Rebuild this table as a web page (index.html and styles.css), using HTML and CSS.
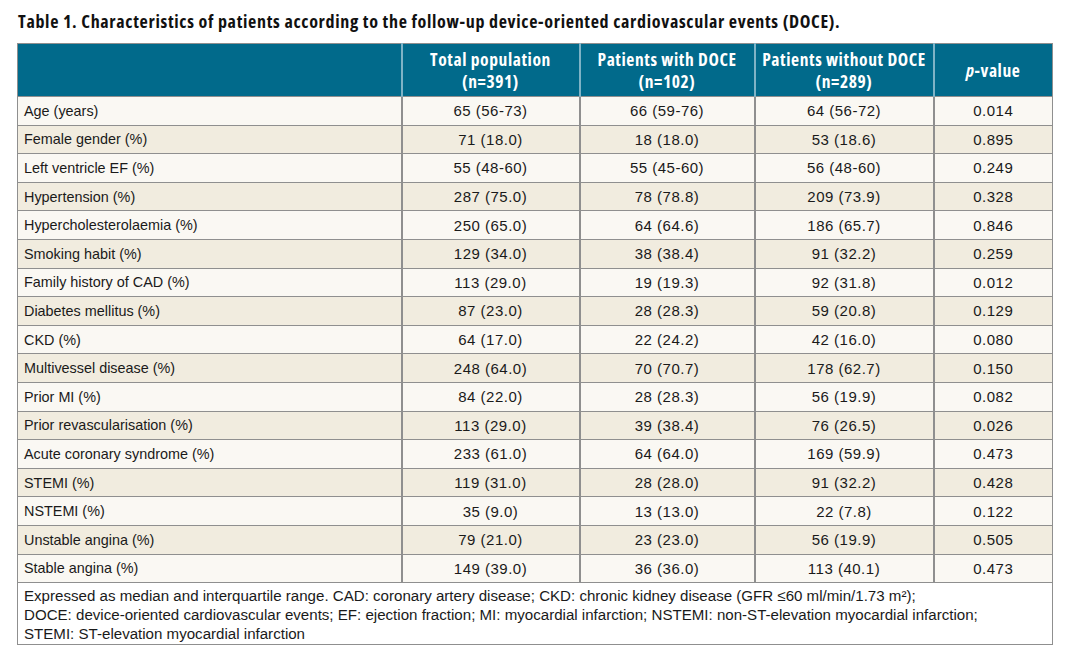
FILE: index.html
```html
<!DOCTYPE html>
<html>
<head>
<meta charset="utf-8">
<link rel="stylesheet" href="styles.css">
</head>
<body>
<div class="wrap">
<h1 class="title">Table 1. Characteristics of patients according to the follow-up device-oriented cardiovascular events (DOCE).</h1>
<table class="tbl">
<colgroup><col class="c1"><col class="c2"><col class="c3"><col class="c4"><col class="c5"></colgroup>
<thead>
<tr><th></th><th>Total population<br>(n=391)</th><th>Patients with DOCE<br>(n=102)</th><th>Patients without DOCE<br>(n=289)</th><th><i>p</i>-value</th></tr>
</thead>
<tbody>
<tr><td>Age (years)</td><td>65 (56-73)</td><td>66 (59-76)</td><td>64 (56-72)</td><td>0.014</td></tr>
<tr><td>Female gender (%)</td><td>71 (18.0)</td><td>18 (18.0)</td><td>53 (18.6)</td><td>0.895</td></tr>
<tr><td>Left ventricle EF (%)</td><td>55 (48-60)</td><td>55 (45-60)</td><td>56 (48-60)</td><td>0.249</td></tr>
<tr><td>Hypertension (%)</td><td>287 (75.0)</td><td>78 (78.8)</td><td>209 (73.9)</td><td>0.328</td></tr>
<tr><td>Hypercholesterolaemia (%)</td><td>250 (65.0)</td><td>64 (64.6)</td><td>186 (65.7)</td><td>0.846</td></tr>
<tr><td>Smoking habit (%)</td><td>129 (34.0)</td><td>38 (38.4)</td><td>91 (32.2)</td><td>0.259</td></tr>
<tr><td>Family history of CAD (%)</td><td>113 (29.0)</td><td>19 (19.3)</td><td>92 (31.8)</td><td>0.012</td></tr>
<tr><td>Diabetes mellitus (%)</td><td>87 (23.0)</td><td>28 (28.3)</td><td>59 (20.8)</td><td>0.129</td></tr>
<tr><td>CKD (%)</td><td>64 (17.0)</td><td>22 (24.2)</td><td>42 (16.0)</td><td>0.080</td></tr>
<tr><td>Multivessel disease (%)</td><td>248 (64.0)</td><td>70 (70.7)</td><td>178 (62.7)</td><td>0.150</td></tr>
<tr><td>Prior MI (%)</td><td>84 (22.0)</td><td>28 (28.3)</td><td>56 (19.9)</td><td>0.082</td></tr>
<tr><td>Prior revascularisation (%)</td><td>113 (29.0)</td><td>39 (38.4)</td><td>76 (26.5)</td><td>0.026</td></tr>
<tr><td>Acute coronary syndrome (%)</td><td>233 (61.0)</td><td>64 (64.0)</td><td>169 (59.9)</td><td>0.473</td></tr>
<tr><td>STEMI (%)</td><td>119 (31.0)</td><td>28 (28.0)</td><td>91 (32.2)</td><td>0.428</td></tr>
<tr><td>NSTEMI (%)</td><td>35 (9.0)</td><td>13 (13.0)</td><td>22 (7.8)</td><td>0.122</td></tr>
<tr><td>Unstable angina (%)</td><td>79 (21.0)</td><td>23 (23.0)</td><td>56 (19.9)</td><td>0.505</td></tr>
<tr><td>Stable angina (%)</td><td>149 (39.0)</td><td>36 (36.0)</td><td>113 (40.1)</td><td>0.473</td></tr>
</tbody>
<tfoot>
<tr><td colspan="5" class="note">Expressed as median and interquartile range. CAD: coronary artery disease; CKD: chronic kidney disease (GFR ≤60 ml/min/1.73 m²);<br>DOCE: device-oriented cardiovascular events; EF: ejection fraction; MI: myocardial infarction; NSTEMI: non-ST-elevation myocardial infarction;<br>STEMI: ST-elevation myocardial infarction</td></tr>
</tfoot>
</table>
</div>
</body>
</html>
```
FILE: styles.css
```css
html, body { margin: 0; padding: 0; background: #fff; }
body { font-family: "Liberation Sans", Arial, sans-serif; color: #1a1a1a; }
.wrap { padding: 10px 17px 0 17px; width: 1035px; }
.title {
  margin: 0 0 10px 1px;
  font-family: "Open Sans", sans-serif;
  font-stretch: 75%;
  font-weight: 700;
  font-size: 18px;
  letter-spacing: 0.68px;
  line-height: 23px;
  color: #111;
}
.tbl { border-collapse: collapse; width: 1035px; table-layout: fixed; }
.c1 { width: 384px; } .c2 { width: 178px; } .c3 { width: 175px; } .c4 { width: 179px; } .c5 { width: 119px; }
.tbl th {
  background: #016a8b;
  color: #fff;
  font-family: "Open Sans", sans-serif;
  font-stretch: 75%;
  font-weight: 700;
  font-size: 17.5px;
  letter-spacing: 0.6px;
  line-height: 22px;
  height: 52px;
  padding: 0;
  text-align: center;
  border: 1px solid #8f8f8f;
  border-left: 2px solid #7fb3c6;
}
.tbl th:first-child { border-left: 1px solid #8f8f8f; }
.tbl th i { font-style: italic; }
.tbl td {
  font-size: 15px;
  height: 27.6px;
  padding: 0;
  text-align: center;
  border: 1px solid #8f8f8f;
  border-left: 2px solid #8f8f8f;
  letter-spacing: 0.5px;
}
.tbl td:first-child { text-align: left; padding-left: 6px; border-left: 1px solid #8f8f8f; letter-spacing: 0; font-size: 14.4px; }
.tbl tbody tr:nth-child(odd) td { background: #faf8f3; }
.tbl tbody tr:nth-child(even) td { background: #f1ecdf; }
.tbl td.note {
  background: #fff;
  text-align: left;
  padding: 3px 7px 1px 6px;
  font-size: 15.1px;
  line-height: 19px;
  height: auto;
  letter-spacing: 0;
}
```
